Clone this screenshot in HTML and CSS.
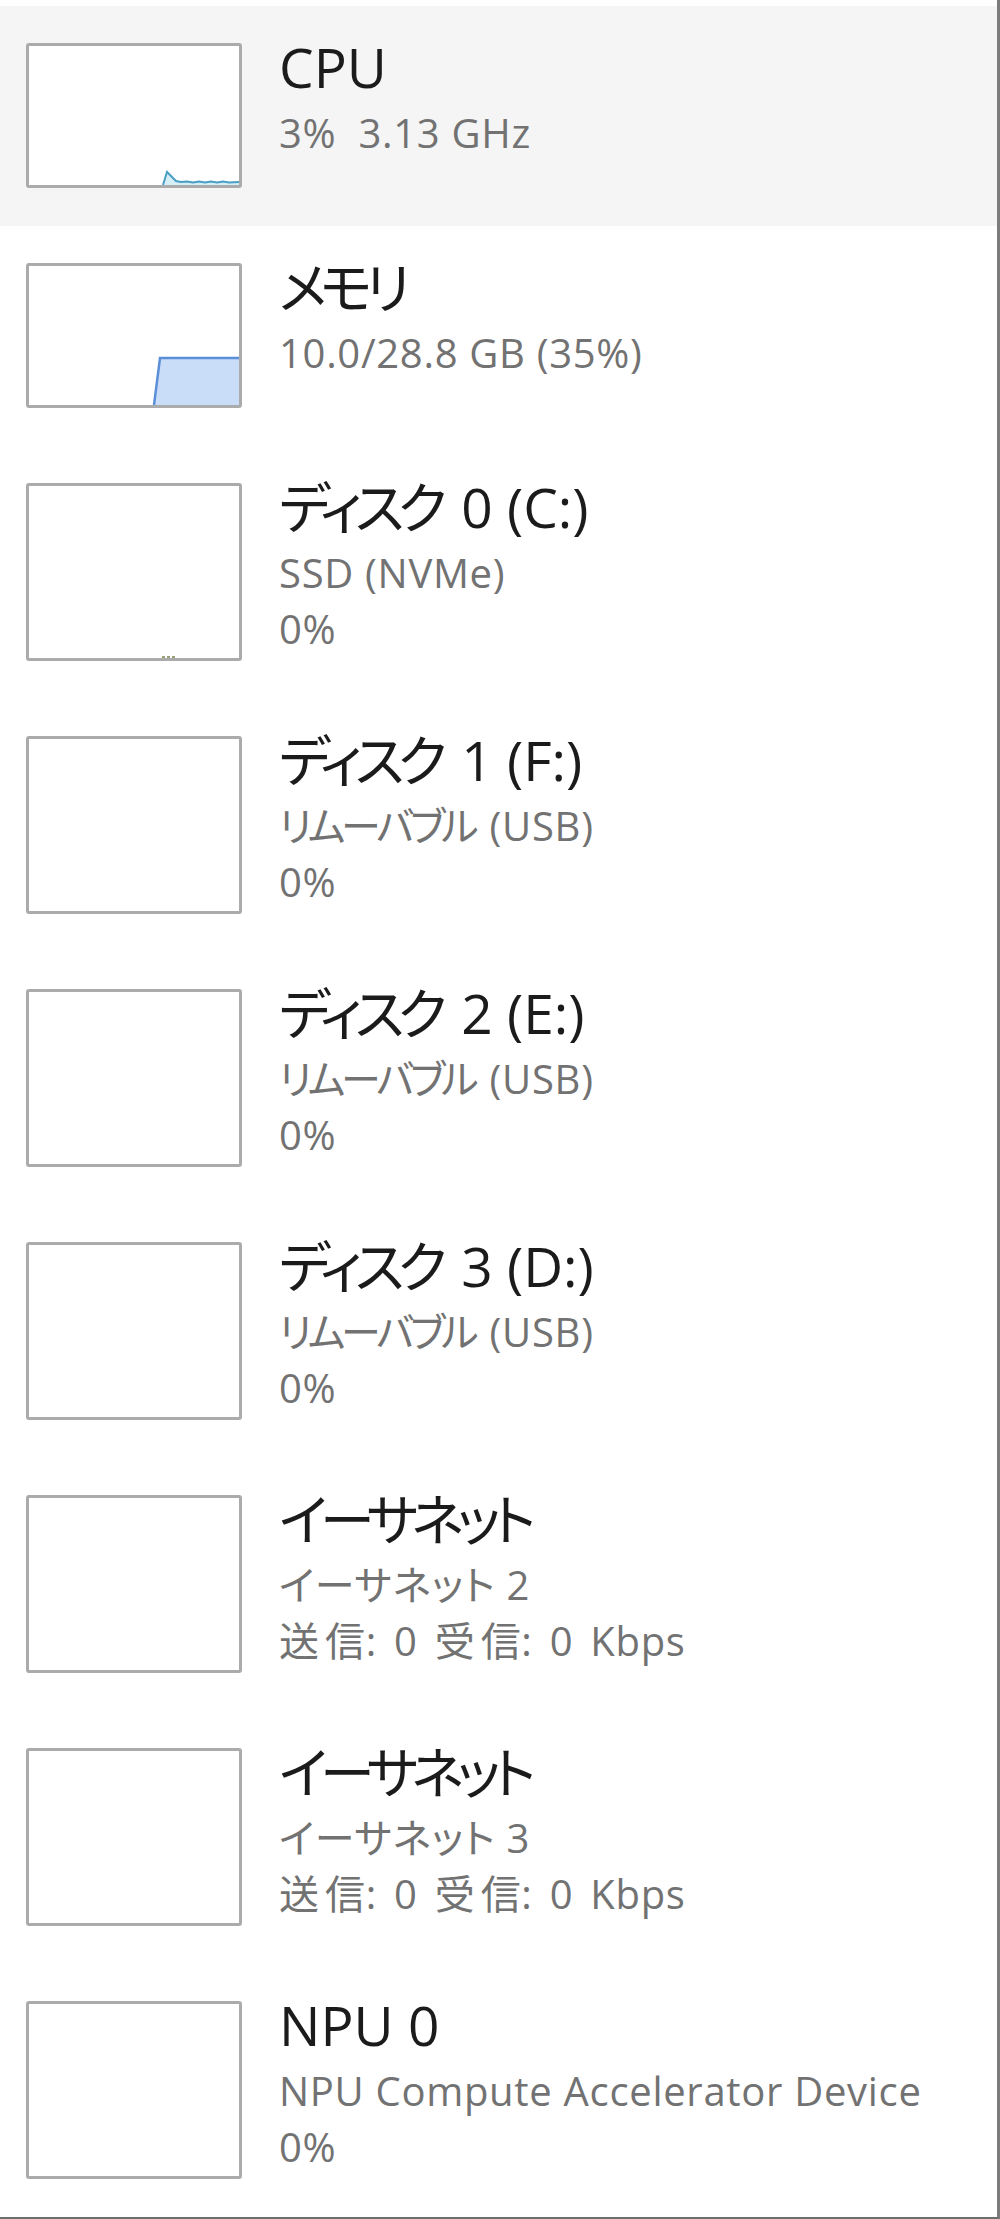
FILE: index.html
```html
<!DOCTYPE html>
<html lang="ja">
<head>
<meta charset="utf-8">
<title>パフォーマンス</title>
<link rel="stylesheet" href="styles.css">
</head>
<body>
<div class="panel">
  <div class="row selected">
    <div class="graph">
      <svg class="chart" viewBox="0 0 210 139" preserveAspectRatio="none">
        <path d="M134 139 L138 126 L142 130 L147 135 L152 136 L158 135.5 L164 136.5 L170 135.5 L176 136.5 L182 135.5 L188 136.5 L194 135.5 L200 136.5 L210 136 L210 139 Z" fill="#d6eef6" stroke="none"/>
        <path d="M134 139 L138 126 L142 130 L147 135 L152 136 L158 135.5 L164 136.5 L170 135.5 L176 136.5 L182 135.5 L188 136.5 L194 135.5 L200 136.5 L210 136" fill="none" stroke="#4a9fc4" stroke-width="2"/>
      </svg>
    </div>
    <div class="info">
      <div class="title">CPU</div>
      <div class="sub">3%&nbsp; 3.13 GHz</div>
    </div>
  </div>

  <div class="row">
    <div class="graph">
      <svg class="chart" viewBox="0 0 210 139" preserveAspectRatio="none">
        <path d="M125 139 L131 92 L210 92 L210 139 Z" fill="#c9ddf8" stroke="none"/>
        <path d="M125 139 L131 92 L210 92" fill="none" stroke="#5b8fd8" stroke-width="2.5"/>
      </svg>
    </div>
    <div class="info">
      <div class="title"><span class="kana">メモリ</span></div>
      <div class="sub">10.0/28.8 GB (35%)</div>
    </div>
  </div>

  <div class="row tall">
    <div class="graph">
      <svg class="chart" viewBox="0 0 210 172" preserveAspectRatio="none">
        <path d="M133 171 L146 171" fill="none" stroke="#9aa07a" stroke-width="2" stroke-dasharray="3 2"/>
      </svg>
    </div>
    <div class="info">
      <div class="title"><span class="kana">ディスク</span> 0 (C:)</div>
      <div class="sub">SSD (NVMe)</div>
      <div class="sub">0%</div>
    </div>
  </div>

  <div class="row tall">
    <div class="graph"></div>
    <div class="info">
      <div class="title"><span class="kana">ディスク</span> 1 (F:)</div>
      <div class="sub"><span class="narrow">リムーバブル</span> (USB)</div>
      <div class="sub">0%</div>
    </div>
  </div>

  <div class="row tall">
    <div class="graph"></div>
    <div class="info">
      <div class="title"><span class="kana">ディスク</span> 2 (E:)</div>
      <div class="sub"><span class="narrow">リムーバブル</span> (USB)</div>
      <div class="sub">0%</div>
    </div>
  </div>

  <div class="row tall">
    <div class="graph"></div>
    <div class="info">
      <div class="title"><span class="kana">ディスク</span> 3 (D:)</div>
      <div class="sub"><span class="narrow">リムーバブル</span> (USB)</div>
      <div class="sub">0%</div>
    </div>
  </div>

  <div class="row tall">
    <div class="graph"></div>
    <div class="info">
      <div class="title"><span class="kana">イーサネット</span></div>
      <div class="sub">イーサネット 2</div>
      <div class="sub net"><span class="wide">送</span>信: 0 <span class="wide">受</span>信: 0 Kbps</div>
    </div>
  </div>

  <div class="row tall">
    <div class="graph"></div>
    <div class="info">
      <div class="title"><span class="kana">イーサネット</span></div>
      <div class="sub">イーサネット 3</div>
      <div class="sub net"><span class="wide">送</span>信: 0 <span class="wide">受</span>信: 0 Kbps</div>
    </div>
  </div>

  <div class="row tall">
    <div class="graph"></div>
    <div class="info">
      <div class="title">NPU 0</div>
      <div class="sub">NPU Compute Accelerator Device</div>
      <div class="sub">0%</div>
    </div>
  </div>
</div>
</body>
</html>
```

FILE: styles.css
```css
html, body {
  margin: 0;
  padding: 0;
  background: #ffffff;
}

body {
  width: 1000px;
  font-family: "Open Sans", "Noto Sans CJK JP", sans-serif;
  font-feature-settings: "palt";
}

.panel {
  box-sizing: border-box;
  width: 1000px;
  padding-top: 6px;
  border-right: 3px solid #7c7c7c;
  border-bottom: 2px solid #6e6e6e;
  background: #ffffff;
}

.row {
  display: flex;
  align-items: flex-start;
  height: 220px;
  box-sizing: border-box;
  padding: 37px 0 38px 26px;
}

.row.tall {
  height: 253px;
}

.row.selected {
  background: #f5f5f5;
}

.graph {
  flex: none;
  box-sizing: border-box;
  width: 216px;
  height: 145px;
  border: 3px solid #ababab;
  border-radius: 3px;
  background: #ffffff;
  overflow: hidden;
}

.row.tall .graph {
  height: 178px;
}

.chart {
  display: block;
  width: 100%;
  height: 100%;
}

.info {
  display: flex;
  flex-direction: column;
  margin-left: 37px;
}

.title {
  font-size: 55px;
  line-height: 48px;
  color: #1b1b1b;
  white-space: nowrap;
}

.kana {
  letter-spacing: -7px;
  margin-right: 7px;
}

.sub {
  font-size: 40px;
  line-height: 56px;
  letter-spacing: 0.7px;
  color: #727272;
  white-space: nowrap;
}

.title + .sub {
  margin-top: 14px;
}

.narrow {
  letter-spacing: -4px;
  margin-right: 4px;
}

.net {
  word-spacing: 6px;
}

.wide {
  letter-spacing: 6px;
}
```
